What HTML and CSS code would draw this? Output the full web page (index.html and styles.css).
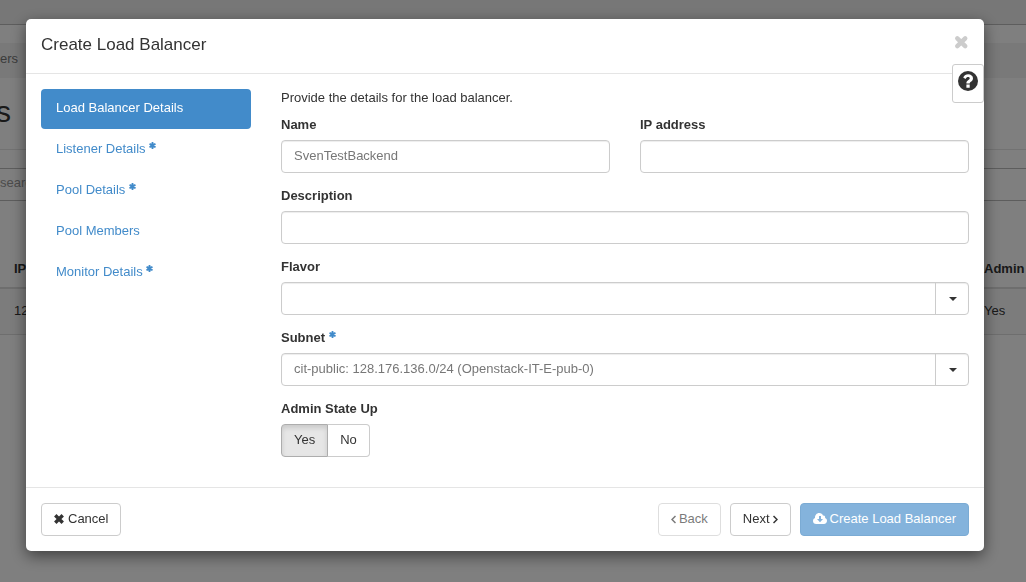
FILE: index.html
```html
<!DOCTYPE html>
<html lang="en">
<head>
<meta charset="utf-8">
<title>Create Load Balancer</title>
<link rel="stylesheet" href="styles.css">
</head>
<body>
<svg class="defs" aria-hidden="true">
  <symbol id="star" viewBox="0 0 16 16"><path d="M8 2V14M2.800 5L13.200 11M13.200 5L2.800 11" stroke="currentColor" stroke-width="4.500" stroke-linecap="round"/></symbol>
  <symbol id="times" viewBox="0 0 16 16"><path d="M4 4L12 12M12 4L4 12" stroke="currentColor" stroke-width="5.500" stroke-linecap="square" stroke-linejoin="round"/></symbol>
  <symbol id="times-round" viewBox="0 0 16 16"><path d="M4.300 4.300L12.200 12.200M12.200 4.300L4.300 12.200" stroke="currentColor" stroke-width="4.500" stroke-linecap="round"/></symbol>
</svg>
<div class="page">
  <div class="topbar"></div>
  <div class="breadcrumb">ers</div>
  <h1 class="page-title">s</h1>
  <div class="toolbar"></div>
  <div class="search">search</div>
  <table class="listing">
    <thead><tr><th class="col-ip">IP</th><th class="col-admin">Admin</th></tr></thead>
    <tbody><tr><td>12</td><td>Yes</td></tr></tbody>
  </table>
</div>
<div class="backdrop">
  <div class="modal" role="dialog" aria-labelledby="title">
    <header class="modal-header">
      <h2 class="modal-title" id="title">Create Load Balancer</h2>
      <button class="close" type="button" aria-label="Close"><svg width="16" height="16"><use href="#times-round"/></svg></button>
    </header>
    <button class="help" type="button" aria-label="Help"><svg width="20" height="20" viewBox="0 0 20 20"><circle cx="10" cy="10" r="10" fill="#333"/><path d="M5.200 6.500C6.400 4.200 7.900 3.300 10.200 3.300C12.800 3.300 15 5 15 7.200C15 9.600 13.500 10.300 12.500 10.900C11.900 11.300 11.700 11.700 11.700 12.500H8.400C8.300 10.600 9 9.700 10.400 8.900C11.300 8.400 11.700 8 11.700 7.300C11.700 6.600 11 6.100 10.100 6.100C9 6.100 8.400 6.600 7.500 8.100zM8.400 13.600H11.700V16.700H8.400z" fill="#fff"/></svg></button>
    <div class="modal-body">
      <nav class="steps">
        <a class="step active" href="#details">Load Balancer Details</a>
        <a class="step" href="#listener">Listener Details <svg class="star"><use href="#star"/></svg></a>
        <a class="step" href="#pool">Pool Details <svg class="star"><use href="#star"/></svg></a>
        <a class="step" href="#members">Pool Members</a>
        <a class="step" href="#monitor">Monitor Details <svg class="star"><use href="#star"/></svg></a>
      </nav>
      <form class="form" id="details">
        <p class="intro">Provide the details for the load balancer.</p>
        <div class="field"><label for="name">Name</label><input class="control" id="name" type="text" value="SvenTestBackend"></div>
        <div class="field"><label for="ip">IP address</label><input class="control" id="ip" type="text"></div>
        <div class="field wide"><label for="description">Description</label><input class="control" id="description" type="text"></div>
        <div class="field wide"><label for="flavor">Flavor</label>
          <div class="select"><select class="control" id="flavor"><option></option></select><span class="arrow"></span></div>
        </div>
        <div class="field wide"><label for="subnet">Subnet <svg class="star"><use href="#star"/></svg></label>
          <div class="select"><select class="control" id="subnet"><option>cit-public: 128.176.136.0/24 (Openstack-IT-E-pub-0)</option></select><span class="arrow"></span></div>
        </div>
        <fieldset class="field wide"><legend>Admin State Up</legend>
          <div class="toggle">
            <label><input type="radio" name="admin" checked>Yes</label>
            <label><input type="radio" name="admin">No</label>
          </div>
        </fieldset>
      </form>
    </div>
    <footer class="modal-footer">
      <button class="btn cancel" type="button"><svg width="10" height="10"><use href="#times"/></svg>Cancel</button>
      <button class="btn" type="button" disabled><svg width="5" height="9" viewBox="0 0 5 9"><path d="M4.500 1L1 4.500L4.500 8" fill="none" stroke="currentColor" stroke-width="1.500"/></svg>Back</button>
      <button class="btn next" type="button">Next<svg width="5" height="9" viewBox="0 0 5 9"><path d="M.500 1L4 4.500L.500 8" fill="none" stroke="currentColor" stroke-width="1.500"/></svg></button>
      <button class="btn primary" type="button" disabled><svg width="14" height="12" viewBox="0 0 14 12"><path fill="#fff" fill-rule="evenodd" d="M3.200 11C1.300 11 0 9.600 0 7.900C0 6.500 .800 5.500 2 5C1.800 2.200 3.700 0 6.200 0C8.200 0 9.500 1 10.100 2.700C11.500 2.300 12.500 3.500 12.100 4.900C13.300 5.300 14 6.400 14 7.700C14 9.600 12.700 11 10.900 11zM6 3V6H4L7 9.300L10 6H8V3z"/></svg>Create Load Balancer</button>
    </footer>
  </div>
</div>
</body>
</html>
```
FILE: styles.css
```css
* { box-sizing: border-box; }
body {
  margin: 0;
  color: #333;
  background: #fff;
  font: 13px/18px "Liberation Sans", Arial, sans-serif;
  overflow: hidden;
}
button, input, select { font: inherit; color: inherit; }
.defs { display: none; }

/* page behind the dialog */
.page { min-height: 100vh; }
.topbar { height: 25px; background: #eee; border-bottom: 1px solid #bbb; }
.breadcrumb { margin-top: 18px; padding: 7px 0 10px; background: #f3f3f3; color: #777; }
.page-title { margin: 0; padding: 13px 0 17px; font-size: 30px; font-weight: 400; line-height: 41px; text-indent: -4px; border-bottom: 1px solid #e5e5e5; }
.toolbar { height: 18px; }
.search { height: 33px; padding: 5px 0; color: #999; border: 1px solid #bbb; border-width: 1px 0; }
.listing { width: 100%; margin-top: 50px; border-collapse: collapse; table-layout: fixed; }
.listing th, .listing td { padding: 9px 0 9px 14px; text-align: left; }
.listing th { border-bottom: 2px solid #ddd; }
.listing td { padding-top: 13px; padding-bottom: 14px; background: #f9f9f9; border-bottom: 1px solid #ddd; }
.listing .col-admin { width: 42px; }
.listing tr > :last-child { padding-left: 0; }

.backdrop {
  position: fixed;
  inset: 0;
  padding: 19px 42px 31px 26px;
  background: rgba(0, 0, 0, .5);
}
.modal {
  position: relative;
  background: #fff;
  border-radius: 5px;
  box-shadow: 0 5px 15px rgba(0, 0, 0, .5);
}
.modal-header {
  display: flex;
  justify-content: space-between;
  align-items: flex-start;
  padding: 15px 15px 18px;
  border-bottom: 1px solid #e5e5e5;
}
.modal-title { margin: 0; font-size: 17px; font-weight: 400; line-height: 21px; }
.close { display: flex; padding: 0; border: 0; background: none; color: #ccc; }
.help {
  position: absolute;
  top: 45px;
  right: 0;
  display: flex;
  padding: 6px 5px 11px;
  background: #fff;
  border: 1px solid #ccc;
  border-radius: 3px;
}
.modal-body { display: flex; gap: 30px; padding: 15px 15px 30px; }
.steps { flex: 0 0 210px; display: flex; flex-direction: column; gap: 1px; }
.step { padding: 10px 15px 12px; color: #428bca; text-decoration: none; border-radius: 4px; }
.step.active { color: #fff; background: #428bca; }
.star { width: 7px; height: 7px; color: #428bca; vertical-align: 4px; }

.form { flex: 1; display: grid; grid-template-columns: 1fr 1fr; column-gap: 30px; row-gap: 14px; }
.intro { grid-column: 1 / -1; margin: 0 0 -5px; }
.wide { grid-column: 1 / -1; }
.field { min-width: 0; margin: 0; padding: 0; border: 0; }
.field > label, legend { display: block; margin: 0 0 6px; padding: 0; font-weight: 700; }
.control {
  display: block;
  width: 100%;
  height: 33px;
  padding: 5px 12px 7px;
  color: #777;
  background: #fff;
  border: 1px solid #ccc;
  border-radius: 4px;
  box-shadow: inset 0 1px 1px rgba(0, 0, 0, .075);
}
.select { display: grid; }
.select > * { grid-area: 1 / 1; }
.select .control { appearance: none; padding-right: 40px; }
.arrow {
  justify-self: end;
  display: grid;
  place-items: center;
  width: 34px;
  border-left: 1px solid #ccc;
  pointer-events: none;
}
.arrow::before { content: ""; border: 4px solid transparent; border-top-color: #333; border-bottom: 0; }
.toggle { display: flex; }
.toggle label { padding: 6px 12px 7px; border: 1px solid #ccc; border-radius: 0 4px 4px 0; border-left: 0; }
.toggle label:first-child { border-left: 1px solid #adadad; border-radius: 4px 0 0 4px; }
.toggle label:has(:checked) { background: #e6e6e6; border-color: #adadad; box-shadow: inset 0 3px 5px rgba(0, 0, 0, .125); }
.toggle input { position: absolute; opacity: 0; pointer-events: none; }

.modal-footer { display: flex; gap: 9px; padding: 15px; border-top: 1px solid #e5e5e5; }
.btn {
  display: flex;
  align-items: center;
  gap: 3px;
  padding: 6px 12px 7px;
  background: #fff;
  border: 1px solid #ccc;
  border-radius: 4px;
}
.btn:disabled { opacity: .65; }
.cancel { margin-right: auto; gap: 4px; }
.primary { color: #fff; background: #428bca; border-color: #357ebd; }
```
